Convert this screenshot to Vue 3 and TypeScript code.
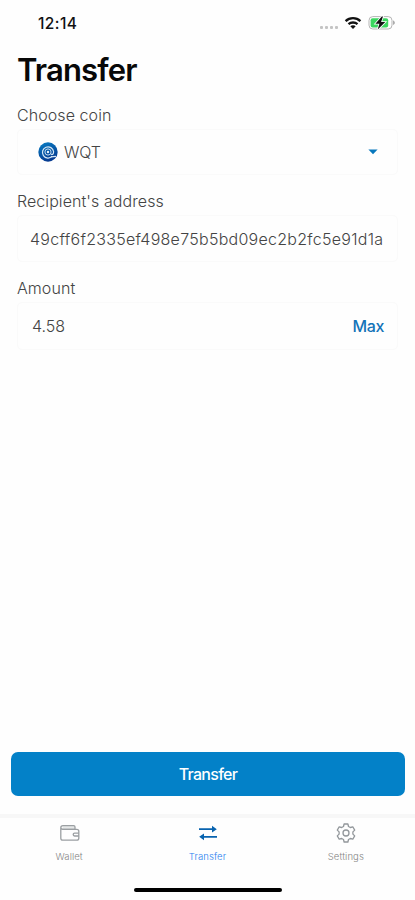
<script setup lang="ts">
import { ref } from 'vue'

type TabName = 'Wallet' | 'Transfer' | 'Settings'

const tabs: TabName[] = ['Wallet', 'Transfer', 'Settings']
const activeTab = ref<TabName>('Transfer')
const coin = ref('WQT')
const address = ref('49cff6f2335ef498e75b5bd09ec2b2fc5e91d1a')
const amount = ref('4.58')
</script>

<template>
  <div class="screen">
    <header class="status">
      <span class="time">12:14</span>
      <div class="indicators">
        <span class="signal"><i v-for="n in 4" :key="n"></i></span>
        <svg class="wifi" width="18" height="14" viewBox="0 0 18 14" fill="none" stroke="#111" stroke-width="2.3">
          <path d="M1.6 5.1C5.7 1.1 12.3 1.1 16.4 5.1" />
          <path d="M4.5 8.2C7 5.9 11 5.9 13.5 8.2" />
          <path d="M6.3 10.3C7.8 9 10.2 9 11.7 10.3L9 13Z" fill="#111" stroke="none" />
        </svg>
        <svg class="battery" width="28" height="16" viewBox="0 0 28 16">
          <rect x="1" y="1.6" width="23" height="12.4" rx="3.8" fill="#fff" stroke="#b5b5b5" />
          <path d="M25.2 5.6C27.2 6.3 27.2 9.3 25.2 10Z" fill="#999" />
          <rect x="2.6" y="3.2" width="17.6" height="9.2" rx="2" fill="#3bd75f" />
          <path d="M13.8 1.5L7.4 8.8H11.4L9.7 14.6L17.3 7H13.1L15 1.5Z" fill="#111" stroke="#fff" stroke-width="1.6" paint-order="stroke" />
        </svg>
      </div>
    </header>

    <main class="content">
      <h1>Transfer</h1>

      <div class="label choose">Choose coin</div>
      <div class="field coin-field">
        <svg class="coin" width="20" height="20" viewBox="0 0 20 20" fill="none">
          <defs>
            <linearGradient id="coinFill" x1="0" y1="0" x2="0.4" y2="1">
              <stop stop-color="#087fc5" />
              <stop offset="1" stop-color="#063b91" />
            </linearGradient>
          </defs>
          <circle cx="10" cy="10" r="9.7" fill="url(#coinFill)" />
          <path d="M14.2 14.2A5.6 5.6 0 1 1 15.6 9.7C15.6 12.4 14.3 13 13.1 12" stroke="#d6e7f5" stroke-width="1.2" />
          <circle cx="10" cy="10" r="3.1" stroke="#c5dcf1" stroke-width="1" />
          <circle cx="10" cy="10" r="1.2" fill="#e8f2fb" />
          <path d="M13 14.8L18 14.4" stroke="#d6e7f5" stroke-width="1.3" />
        </svg>
        <span class="coin-name">{{ coin }}</span>
        <svg class="caret" width="10" height="6" viewBox="0 0 10 6"><path d="M.4.5H9.6L5 5.3Z" fill="#0878bd" /></svg>
      </div>

      <div class="label recipient">Recipient's address</div>
      <div class="field address-field"><span class="address">{{ address }}</span></div>

      <div class="label amount-label">Amount</div>
      <div class="field amount-field">
        <span class="amount">{{ amount }}</span>
        <span class="max">Max</span>
      </div>
    </main>

    <button class="submit" type="button"><span>Transfer</span></button>

    <nav class="tabs">
      <div
        v-for="tab in tabs"
        :key="tab"
        class="tab"
        :class="[tab.toLowerCase(), { active: tab === activeTab }]"
        @click="activeTab = tab"
      >
        <svg v-if="tab === 'Wallet'" width="22" height="22" viewBox="0 0 22 22" fill="none" stroke="#9b9fa2" stroke-width="1.3">
          <path d="M4 3.6H14.6Q16 3.6 16 5V7.3H3.5" fill="#e6e8e8" />
          <path d="M4 3.6Q1.8 3.6 1.8 5.8V16.2Q1.8 18.1 3.8 18.1H17.8Q19.8 18.1 19.8 16.2V9.3Q19.8 7.3 17.8 7.3H4Q1.8 7.3 1.8 5.5" />
          <path d="M19.8 11.1H15.6Q14.2 11.1 14.2 12.5T15.6 14H19.8" />
        </svg>
        <svg v-else-if="tab === 'Transfer'" width="22" height="22" viewBox="0 0 22 22" fill="none" stroke="#0863af" stroke-width="1.7">
          <path d="M2 7.2H17M5 14.8H20" />
          <path d="M15 3.8L19.8 7.2L15 10.6ZM7 11.4L2.2 14.8L7 18.2Z" fill="#0863af" stroke="none" />
        </svg>
        <svg v-else width="22" height="22" viewBox="0 0 22 22" fill="none" stroke="#92979b" stroke-width="1.3" stroke-linejoin="round">
          <path d="M9.1 2H12.9L13.5 4.5L15.3 5.5L17.8 4.8L19.7 8.1L17.9 9.9V12.1L19.7 13.9L17.8 17.2L15.3 16.5L13.5 17.5L12.9 20H9.1L8.5 17.5L6.7 16.5L4.2 17.2L2.3 13.9L4.1 12.1V9.9L2.3 8.1L4.2 4.8L6.7 5.5L8.5 4.5Z" />
          <circle cx="11" cy="11" r="3" />
        </svg>
        <span>{{ tab }}</span>
      </div>
    </nav>
    <div class="home"></div>
  </div>
</template>

<style>
body {
  background: #fefefe;
}
</style>

<style scoped>
.screen {
  width: 415px;
  height: 900px;
  box-sizing: border-box;
  display: flex;
  flex-direction: column;
  overflow: hidden;
  background: #fefefe;
  font-family: Inter, 'Liberation Sans', sans-serif;
  color: #444;
}
.status {
  height: 46px;
  flex: none;
  display: flex;
  justify-content: space-between;
  padding: 0 19px 0 38px;
  box-sizing: border-box;
}
.time {
  font-size: 15.5px;
  line-height: 47px;
  font-weight: 500;
  letter-spacing: 0.4px;
  color: #111;
}
.indicators {
  display: flex;
  align-items: center;
}
.signal {
  display: flex;
  gap: 2px;
  margin: 8px 6px 0 0;
}
.signal i {
  width: 3px;
  height: 3px;
  border-radius: 1px;
  background: #c4c4c4;
}
.wifi {
  margin-right: 6px;
}
.content {
  flex: 1;
  padding: 0 17px;
}
h1 {
  margin: 6px 0 0;
  font-size: 31px;
  line-height: 36px;
  font-weight: 600;
  letter-spacing: -0.85px;
  color: #080808;
}
.label {
  font-size: 16px;
  line-height: 20px;
  font-weight: 300;
  letter-spacing: 0.07px;
}
.choose {
  margin-top: 17px;
}
.recipient {
  margin-top: 16px;
}
.amount-label {
  margin-top: 16px;
}
.field {
  display: flex;
  align-items: center;
  box-sizing: border-box;
  border: 1px solid #fafafa;
  border-radius: 5px;
  font-size: 16px;
  font-weight: 300;
}
.coin-field {
  height: 46px;
  margin-top: 4px;
  padding: 0 19px 0 20px;
}
.coin-name {
  margin-left: 6px;
  flex: 1;
  letter-spacing: -0.2px;
}
.address-field {
  height: 47px;
  margin-top: 4px;
  padding-left: 12px;
}
.address {
  letter-spacing: 0.27px;
  white-space: nowrap;
}
.amount-field {
  height: 48px;
  margin-top: 4px;
  padding: 0 13px 0 14px;
  justify-content: space-between;
}
.max {
  color: #1474b8;
  font-weight: 500;
  letter-spacing: -0.4px;
}
.submit {
  flex: none;
  height: 44px;
  margin: 0 10px 18px 11px;
  padding: 0;
  border: 0;
  border-radius: 7px;
  background: #0381c8;
  color: #fff;
  font: 500 16px/44px Inter, 'Liberation Sans', sans-serif;
  letter-spacing: -0.7px;
}
.tabs {
  flex: none;
  height: 54px;
  box-sizing: border-box;
  border-top: 4px solid #f7f7f7;
  display: grid;
  grid-template-columns: repeat(3, 1fr);
}
.tab {
  display: flex;
  flex-direction: column;
  align-items: center;
  padding-top: 4px;
  font-size: 9.5px;
  line-height: 12px;
  font-weight: 300;
  letter-spacing: 0.1px;
  color: #858585;
}
.tab svg {
  margin-left: 1px;
}
.tab span {
  margin-top: 7px;
}
.tab.active {
  color: #287ef0;
}
.home {
  flex: none;
  width: 148px;
  height: 4px;
  margin: 20px auto 8px 134px;
  border-radius: 2px;
  background: #000;
}
</style>
